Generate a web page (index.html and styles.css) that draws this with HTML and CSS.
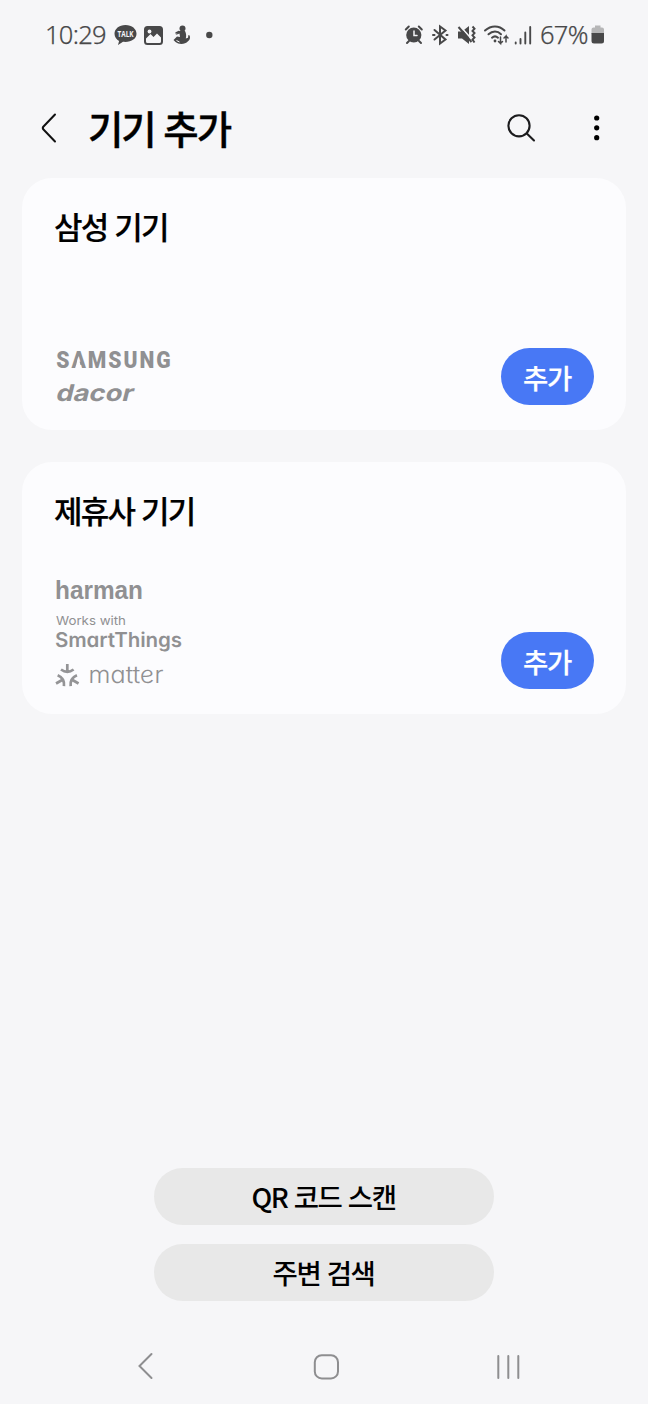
FILE: index.html
```html
<!DOCTYPE html>
<html lang="ko">
<head>
<meta charset="utf-8">
<title>기기 추가</title>
<link rel="stylesheet" href="styles.css">
</head>
<body>
<div class="screen">
  <div class="status">
    <span class="clock">10:29</span>
    <svg class="status-left" width="104" height="26" viewBox="0 0 104 26">
      <path fill="#484849" d="M11.500 3C5 3 .5 7 .5 11.700c0 3.200 2 5.800 4.600 7.300L4 23l5-3.200c8 .8 13.500-3 13.500-8.100C22.500 7 18 3 11.500 3z"/>
      <text x="3.500" y="14.500" textLength="16" lengthAdjust="spacingAndGlyphs" class="talk">TALK</text>
      <rect x="31" y="5" width="17" height="17" rx="2.500" fill="none" stroke="#484849" stroke-width="2"/>
      <path fill="#484849" d="M31 5h17v11.500l-5-5-3.500 3.500-3-3L31 17.500z"/>
      <circle cx="35.500" cy="9.500" r="1.900" fill="#f6f6f8"/>
      <circle cx="68.500" cy="6.500" r="3" fill="#484849"/>
      <path d="M65.500 9h5.500c1.200 2.500 1.500 4.500.8 7.500l2.200-.8c.6-1.200-.3-2.200.8-2.700 1.700.5 1.800 4.500-.8 6.300-3 3.200-9 3.500-12.500.7l-2-2 3.500-3.500 3 .5-.5-3.500-4 1.500z" fill="#484849"/>
      <path d="M62 11l3-1.500" stroke="#484849" stroke-width="1.500" stroke-linecap="round"/>
      <path d="M62.500 18.500l3 1.500" stroke="#f6f6f8" stroke-width="1"/>
      <circle cx="95.300" cy="13" r="3.200" fill="#484849"/>
    </svg>
    <svg class="status-right" width="130" height="26" viewBox="0 0 130 26">
      <g fill="none" stroke="#484849" stroke-width="2" stroke-linecap="round">
        <circle cx="9.800" cy="13" r="7.600" fill="#484849" stroke="none"/>
        <path d="M1.800 7.500l3-3M17.800 7.500l-3-3M5 19l-2 2M15 19l2 2" stroke-width="2"/>
        <path d="M10 9v4.500h3" stroke="#f6f6f8" stroke-width="1.500"/>
        <path d="M30.500 8l11 9.500-5.500 4V4.500l5.500 4L30.500 17.500" stroke-width="2"/>
        <path d="M29 13h1.500M42.500 13h1"/>
      </g>
      <path fill="#484849" d="M54 9.500h4l7-5.500v18l-7-5.500h-4z"/>
      <path d="M56 4l12 13.500" stroke="#f6f6f8" stroke-width="1.700"/>
      <path d="M54.500 5l13 15" stroke="#484849" stroke-width="2"/>
      <path d="M68.500 4.500l2 2.200-2 2.200 2 2.200-2 2.200 2 2.200-2 2.200 2 2.800" fill="none" stroke="#484849" stroke-width="2"/>
      <g fill="none" stroke="#484849" stroke-width="2" stroke-linecap="round">
        <path d="M81 8.500c6-5.500 14-5.500 19.500 0M84.500 12.300c4-3.700 9-3.700 12.500 0M88 15.700c2-1.800 4-1.800 6 0"/>
        <path d="M96.500 15v6.500l-2-2m2 2l2-2M102 20V14l-2 2m2-2l2 2" stroke-width="1.500"/>
        <circle cx="91" cy="19" r="1.400" fill="#484849" stroke="none"/>
        <path d="M111.700 20.500v1M116.500 17v4.500M121.300 10.500v11M126.200 5v16.500" stroke-width="1.900"/>
      </g>
    </svg>
    <span class="percent">67%</span>
    <svg class="battery" width="14" height="22" viewBox="0 0 14 22"><path fill="#b6b6b7" d="M4 1.500h5.500v2H11q2 0 2 2V10H.5V5.500q0-2 2-2H4z"/><path fill="#484849" d="M.5 9h12.500v8q0 2.500-2.500 2.500H3Q.5 19.500.5 17z"/></svg>
  </div>

  <header class="appbar">
    <svg class="back" width="20" height="34" viewBox="0 0 20 34"><path d="M16 3.500L4.500 15.500q-1.500 1.500 0 3L16 30.500" fill="none" stroke="#111" stroke-width="2" stroke-linecap="round"/></svg>
    <h1 class="title">기기 추가</h1>
    <svg class="search" width="32" height="32" viewBox="0 0 32 32"><g fill="none" stroke="#1c1c1e" stroke-width="2.100" stroke-linecap="round"><circle cx="14" cy="13.800" r="10.600"/><path d="M21.800 21.500l7.200 7"/></g></svg>
    <svg class="more" width="8" height="28" viewBox="0 0 8 28"><circle cx="3.700" cy="4" r="2.600"/><circle cx="3.700" cy="13.800" r="2.600"/><circle cx="3.700" cy="23.700" r="2.600"/></svg>
  </header>

  <main class="cards">
    <section class="card">
      <h2 class="card-title">삼성 기기</h2>
      <div class="card-foot">
        <svg class="brands" width="160" height="64" viewBox="0 0 160 64">
          <g transform="translate(2.300 27.300) scale(.88 1)"><text class="samsung" x="0" y="0" textLength="130" lengthAdjust="spacing">SAMSUNG</text></g>
          <path d="M21.200 27.800L24.300 15.500l3.100 12.300z" fill="#fcfcfe"/>
          <g transform="translate(1 59.500) skewX(-14)"><text class="dacor" x="0" y="0" textLength="77" lengthAdjust="spacingAndGlyphs">dacor</text></g>
        </svg>
        <button class="add">추가</button>
      </div>
    </section>
    <section class="card">
      <h2 class="card-title">제휴사 기기</h2>
      <div class="card-foot">
        <svg class="brands" width="160" height="120" viewBox="0 0 160 120">
          <text class="harman" x="1" y="30.200" textLength="88" lengthAdjust="spacingAndGlyphs">harman</text>
          <text class="works" x="2" y="56.200" textLength="70" lengthAdjust="spacingAndGlyphs">Works with</text>
          <g transform="translate(2 78) skewX(9.400)"><text class="smart" x="0" y="0" textLength="127" lengthAdjust="spacingAndGlyphs">SmartThings</text></g>
          <g transform="translate(13.300 108)" fill="none" stroke="#949496" stroke-width="2.700">
            <g id="arm"><path d="M0-13v9M-6.300-7.500Q0-2.800 6.300-7.500"/></g>
            <use href="#arm" transform="rotate(120)"/><use href="#arm" transform="rotate(240)"/>
          </g>
          <g transform="translate(35.500 114) skewX(9.400)"><text class="matter" x="0" y="0" textLength="75" lengthAdjust="spacingAndGlyphs">matter</text></g>
        </svg>
        <button class="add">추가</button>
      </div>
    </section>
  </main>

  <div class="actions">
    <button class="pill">QR 코드 스캔</button>
    <button class="pill">주변 검색</button>
  </div>

  <nav class="nav">
    <svg width="18" height="30" viewBox="0 0 18 30"><path d="M14.500 3L2.500 15l12 12" class="nav-line"/></svg>
    <svg width="28" height="28" viewBox="0 0 28 28"><rect x="2.800" y="2.200" width="23.200" height="23.200" rx="7" class="nav-line"/></svg>
    <svg width="26" height="28" viewBox="0 0 26 28"><path d="M2.300 3v22M12.300 3v22M22.300 3v22" class="nav-line"/></svg>
  </nav>
</div>
</body>
</html>
```
FILE: styles.css
```css
* { box-sizing: border-box; }
body { margin: 0; background: #f6f6f8; font-family: "Noto Sans CJK KR", sans-serif; color: #000; }
button { border: 0; padding: 0; font-family: inherit; color: inherit; }
svg { display: block; flex: none; overflow: visible; }
.screen { width: 648px; height: 1404px; display: flex; flex-direction: column; }

.status { height: 69px; padding: 0 43px 0 45px; display: flex; align-items: center; color: #484849; font-family: "Noto Sans", sans-serif; font-weight: 300; -webkit-text-stroke: 0.250px #484849; }
.status svg { -webkit-text-stroke: 0; }
.clock, .percent { font-size: 25.500px; line-height: 34px; letter-spacing: -0.700px; white-space: nowrap; padding-bottom: 2px; }
.clock { width: 68.500px; }
.percent { width: 54px; margin-left: 6px; }
.talk { font: 700 8px "Open Sans", sans-serif; fill: #f6f6f8; }
.status-right { margin-left: auto; }
.battery { margin-left: -3px; }

.appbar { height: 109px; padding: 9px 47px 0 39px; display: flex; align-items: center; }
.title { margin: 0 auto 0 29px; padding-bottom: 3px; font-size: 38.500px; line-height: 56px; letter-spacing: -2.100px; font-weight: 500; -webkit-text-stroke: 0.400px #000; }
.more { margin-left: 56px; }

.cards { padding: 0 22px; display: flex; flex-direction: column; gap: 32px; }
.card { height: 252px; padding: 24px 32px 25px; border-radius: 30px; background: #fcfcfe; display: flex; flex-direction: column; justify-content: space-between; }
.card-title { margin: 0; font-size: 31px; line-height: 48px; letter-spacing: -1.800px; font-weight: 500; -webkit-text-stroke: 0.200px #000; }
.card-foot { display: flex; justify-content: space-between; align-items: flex-end; }
.add { width: 93px; height: 57px; border-radius: 29px; background: #4878f5; color: #fff; font-size: 27.500px; line-height: 56px; padding-right: 1px; letter-spacing: -1.400px; font-weight: 500; -webkit-text-stroke: 0.200px #fff; }
.brands text { fill: #909092; }
.brands .samsung { font: 900 24px Roboto, sans-serif; }
.brands .dacor { font: 700 23px Inter, sans-serif; }
.brands .harman { font: 700 25px "Liberation Sans", sans-serif; }
.brands .works { font: 400 12px Inter, sans-serif; }
.brands .smart { font: italic 600 20.500px Inter, sans-serif; }
.brands .matter { font: italic 300 24px Inter, sans-serif; }

.actions { margin-top: auto; display: flex; flex-direction: column; align-items: center; gap: 19px; }
.pill { width: 340px; height: 57px; border-radius: 29px; background: #e8e8e8; font-size: 27.500px; line-height: 55px; padding: 0 1px 1px 0; letter-spacing: -1.400px; font-weight: 500; }

.nav { height: 103px; padding: 0 126px 23px 137px; display: flex; align-items: flex-end; justify-content: space-between; }
.nav-line { fill: none; stroke: #8e8e90; stroke-width: 2; stroke-linecap: round; }
```
